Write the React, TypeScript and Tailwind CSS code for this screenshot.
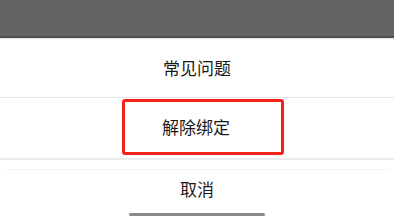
const App = () => {
  return (
    <div
      className="w-[394px] h-[216px] overflow-hidden bg-white flex flex-col"
      style={{ fontFamily: '"Noto Sans CJK SC", "Noto Sans", sans-serif' }}
    >
      <div className="h-[38px] shrink-0 bg-[#636363] border-b-2 border-[#4e4e4e]" />
      <div className="h-px shrink-0 bg-[#e2e2e2]" />
      <div className="h-[58px] shrink-0 flex items-center justify-center text-[17px] text-[#1a1a1a]">
        常见问题
      </div>
      <div className="h-px shrink-0 bg-[#e6e6e6]" />
      <div className="h-[60px] shrink-0 flex pt-px">
        <div className="ml-[122px] w-[162px] h-[56px] pr-[14px] border-[3px] border-[#f5221b] rounded-[3px] flex items-center justify-center text-[17px] text-[#1a1a1a]">
          解除绑定
        </div>
      </div>
      <div className="h-[2px] shrink-0 bg-[#ececec]" />
      <div className="h-[9px] shrink-0 bg-white" />
      <div className="h-px shrink-0 mx-[5px] bg-[#f3f3f3]" />
      <div className="h-[38px] shrink-0 flex items-center justify-center text-[17px] text-[#1a1a1a]">
        取消
      </div>
      <div className="flex-1 flex items-end justify-center">
        <div className="w-[136px] h-[3px] rounded-full bg-[#8a8a8a]" />
      </div>
    </div>
  );
};

export default App;
